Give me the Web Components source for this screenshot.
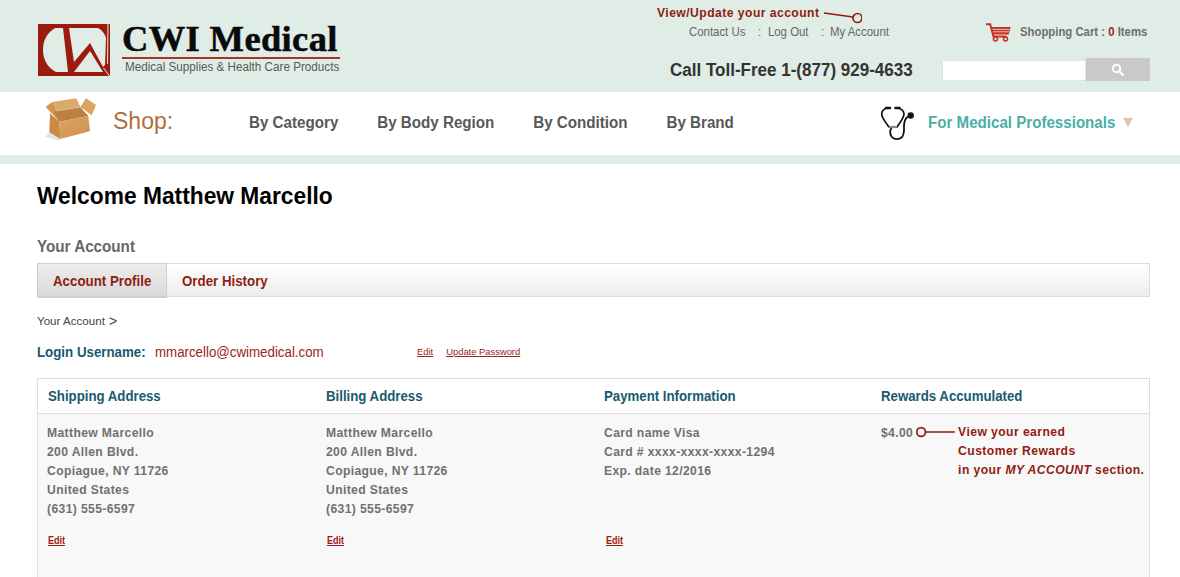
<!DOCTYPE html>
<html><head><meta charset="utf-8"><title>CWI Medical</title>
<style>
html,body{margin:0;padding:0;background:#fff;overflow:hidden;font-family:"Liberation Sans",Arial,sans-serif}
body{width:1180px;height:577px}
</style></head><body>
<cwi-header></cwi-header>
<cwi-nav></cwi-nav>
<cwi-account></cwi-account>
<script>
function def(name,html){
  customElements.define(name,class extends HTMLElement{
    constructor(){super();this.attachShadow({mode:'open'}).innerHTML=html;}
  });
}
def('cwi-logo',`<style>
:host{display:flex;gap:12px;align-items:flex-start}
svg{display:block;flex:none}
.t{display:flex;flex-direction:column;width:218px}
.n{font:bold 36.5px/30px "Liberation Serif",serif;color:#0a0a0a;height:30px;letter-spacing:.35px;-webkit-text-stroke:.5px #0a0a0a;white-space:nowrap}
.l{height:2px;background:#a9322b;margin-top:3px}
.s{font:12.3px/13px "Liberation Sans",sans-serif;color:#555b58;margin:2px 0 0 3px;white-space:nowrap;transform:scaleX(.95);transform-origin:left}
</style>
<svg width="72" height="52" viewBox="0 0 72 52"><rect width="72" height="52" fill="#9d1a10"/>
<path d="M25 4H17C9 9 5 16 5 26s5 18 13 22h12z" fill="#e0ece6"/>
<path d="M31 4H60C64 6 67 10 68 14L67 41 65 43 52 19 36 38Z" fill="#e0ece6"/>
<path d="M36 48L52 27 65 48Z" fill="#e0ece6"/>
<path d="M70 0L69.500 40M65.500 44l6 8" stroke="#e0ece6" stroke-width="1" fill="none"/>
</svg>
<div class="t"><div class="n">CWI Medical</div><div class="l"></div><div class="s">Medical Supplies &amp; Health Care Products</div></div>`);

def('cwi-search',`<style>
:host{display:flex;align-items:flex-end;height:23px}
.i{width:144px;background:#fff;border:1px solid #dfe5e2;box-sizing:border-box;height:21px}
.b{width:64px;height:23px;background:#c9c9c9;display:flex;align-items:center;justify-content:center}
</style><div class="i"></div><div class="b"><svg width="14" height="14" viewBox="0 0 14 14"><circle cx="5.5" cy="5.5" r="3.7" fill="none" stroke="#fff" stroke-width="2"/><path d="M8.5 8.5l4 4" stroke="#fff" stroke-width="2.4"/></svg></div>`);

def('cwi-header',`<style>
:host{display:flex;height:92px;background:#e0ece6;padding:24px 30px 0 38px;box-sizing:border-box;position:relative;color:#666}
.r{margin-left:auto;width:480px;display:flex;flex-direction:column}
.row1{display:flex;align-items:center;height:18px;margin:-1px 0 17px}
.lw{margin-left:19px;width:297px;flex:none}
.links{font:12px/18px "Liberation Sans",sans-serif;color:#666;white-space:nowrap;display:flex;transform:scaleX(.95);transform-origin:left}
.links span:nth-child(1){width:72.6px}.links span:nth-child(2){width:10.5px}
.links span:nth-child(3){width:55.8px}.links span:nth-child(4){width:9.5px}
.cart{display:flex;align-items:center;gap:9px;flex:none;font:bold 12px/18px "Liberation Sans",sans-serif;color:#6e6e6e;white-space:nowrap}
.cart span{display:block;transform:scaleX(.945);transform-origin:left}
.cart b{color:#b3200f}
.row2{display:flex;align-items:center;height:23px}
.tel{font:bold 18px/23px "Liberation Sans",sans-serif;color:#333;width:272px;white-space:nowrap;margin-top:2px}
.tel span{display:block;transform:scaleX(.945);transform-origin:left}
.note{position:absolute;left:657px;top:5px;font:bold 13.500px/15px "Liberation Sans",sans-serif;letter-spacing:.5px;color:#8f1d12;white-space:nowrap}
.note span{display:block;transform:scaleX(.9);transform-origin:left}
.note svg{position:absolute;left:165px;top:3px}
</style>
<cwi-logo></cwi-logo>
<div class="r">
<div class="row1"><div class="lw"><div class="links"><span>Contact Us</span><span>:</span><span>Log Out</span><span>:</span><span>My Account</span></div></div>
<div class="cart"><svg width="25" height="19" viewBox="0 0 25 19"><path d="M0 1.2h4.2l3.3 12.3h13" fill="none" stroke="#c8301f" stroke-width="2"/><path d="M5.6 4h19l-1.8 7.5H7.4z" fill="#c8301f"/><path d="M6.5 6.4h17M7 8.8h16" stroke="#e0ece6" stroke-width=".8"/><circle cx="9.5" cy="16" r="2" fill="none" stroke="#c8301f" stroke-width="1.6"/><circle cx="19.5" cy="16" r="2" fill="none" stroke="#c8301f" stroke-width="1.6"/></svg><span>Shopping Cart : <b>0</b> Items</span></div></div>
<div class="row2"><div class="tel"><span>Call Toll-Free 1-(877) 929-4633</span></div><cwi-search></cwi-search></div>
</div>
<div class="note"><span>View/Update your account</span><svg width="40" height="18" viewBox="0 0 40 18"><path d="M2 5l29 4" stroke="#8f1d12" stroke-width="1.5"/><circle cx="35.5" cy="10" r="4.5" fill="none" stroke="#8f1d12" stroke-width="1.7"/></svg></div>`);

def('cwi-nav',`<style>
:host{display:block;border-bottom:9px solid #e0ece6;height:63px;background:#fff}
.w{display:flex;align-items:center;height:63px;box-sizing:border-box;padding:0 0 2px 44px;font:bold 16px/20px "Liberation Sans",sans-serif;color:#58585a;white-space:nowrap}
.shop{font:23px/28px "Liberation Sans",sans-serif;color:#b06f3a;margin:0 0 4px 16px;width:136px}
.iw{width:632px}
.items{display:flex;gap:41px;transform:scaleX(.948);transform-origin:left}
.pw{margin-left:13px;width:187px;color:#4aaea8}
.pw span{display:block;transform:scaleX(.945);transform-origin:left}
.tri{width:0;height:0;border:5.500px solid transparent;border-top:9px solid #e3c3a6;border-bottom:0;margin-left:8px}
</style><div class="w">
<svg width="53" height="45" viewBox="42 21 159 135" style="flex:none;margin-top:-6px"><defs><linearGradient id="g" x1="0" y1="0" x2="1" y2="1"><stop offset="0" stop-color="#dba363"/><stop offset="1" stop-color="#cf9050"/></linearGradient></defs>
<path d="M58 127l33 20-5 5-40-12z" fill="#e4e4e4"/>
<path d="M67 36l72-11 12 26-70 12z" fill="#dca96c"/><path d="M47 50l20-14 14 27 7 32z" fill="#d39550"/>
<path d="M151 51l17-26 30 20-13 31z" fill="#dba35f"/><path d="M72 65l79-13 24 26-87 17z" fill="#bb8043"/>
<path d="M60 70l28 25 3 52-33-20z" fill="#c98a47"/><path d="M88 95l87-17 5 46-89 23z" fill="url(#g)"/></svg>
<div class="shop">Shop:</div>
<div class="iw"><div class="items"><span>By Category</span><span>By Body Region</span><span>By Condition</span><span>By Brand</span></div></div>
<svg width="35" height="36" viewBox="0 0 35 36" style="flex:none;margin-left:-1px"><path d="M7.500 3C3.500 4 1.500 6.500 1.700 9.500 2 13 6 18 9 22h8c2.500-4 7-9 7-13 0-3-2.500-5-6.500-6" fill="none" stroke="#111" stroke-width="1.700"/><path d="M6 3h4M15.500 3h4" stroke="#111" stroke-width="2.600" stroke-linecap="round"/><path d="M9 22h8" stroke="#888" stroke-width="2.200"/><path d="M11.500 23c-2 3-1.500 6 0 8.500 2 3 7 3.500 10 1 3-2.500 2.500-6 2.500-11 0-4.500 1-8 4-10" fill="none" stroke="#111" stroke-width="1.800"/><circle cx="30.700" cy="10.500" r="3.200" fill="#111"/></svg>
<div class="pw"><span>For Medical Professionals</span></div><span class="tri"></span></div>`);

def('cwi-column',`<style>
:host{display:block;flex:1 1 0;min-width:0}
.h{height:35px;box-sizing:border-box;background:#fff;border-bottom:1px solid #ddd;padding-left:10px;font:bold 14px/34px "Liberation Sans",sans-serif;color:#175a6e;white-space:nowrap}
.h div{transform:scaleX(.945);transform-origin:left}
.b{background:#f8f8f8;height:164px;padding:9px 0 0 var(--p,9.5px);box-sizing:border-box;font:bold 13.500px/19px "Liberation Sans",sans-serif;letter-spacing:.4px;color:#707070;white-space:nowrap}
.e{display:flex;flex-direction:column;height:126px;justify-content:space-between;transform:scaleX(.9);transform-origin:left}
.ed{padding-left:var(--e,1.1px)}
</style><div class="h"><div><slot name="title"></slot></div></div><div class="b"><div class="e"><div><slot></slot></div><div class="ed"><slot name="edit"></slot></div></div></div>`);

def('cwi-edit',`<style>:host{display:inline;font:bold 10px/12px "Liberation Sans",sans-serif;color:#9c1a12;text-decoration:underline;letter-spacing:0}</style><slot></slot>`);

def('cwi-rewards',`<style>
:host{display:flex;align-items:flex-start}
svg{margin:0 3.300px;flex:none}
.t{color:#8f1d12;margin-top:-1px;letter-spacing:.47px}
i{font-style:italic}
</style><span>$4.00</span><svg width="43.300" height="19" viewBox="0 0 39 19" preserveAspectRatio="none"><circle cx="5" cy="9" r="4.400" fill="none" stroke="#8f1d12" stroke-width="1.800"/><path d="M9 9h30" stroke="#8f1d12" stroke-width="1.400"/></svg><div class="t">View your earned<br>Customer Rewards<br>in your <i>MY ACCOUNT</i> section.</div>`);

def('cwi-account',`<style>
:host{display:block;padding:0 30px 0 37px;height:413px;box-sizing:border-box;overflow:hidden;white-space:nowrap}
h1{font:bold 24px/28px "Liberation Sans",sans-serif;color:#000;margin:18px 0 0;transform:scaleX(.949);transform-origin:left}
h2{font:bold 16px/20px "Liberation Sans",sans-serif;color:#666;margin:27px 0 0;transform:scaleX(.95);transform-origin:left}
.tabs{display:flex;height:34px;margin-top:6px;border:1px solid #ddd;box-sizing:border-box;background:linear-gradient(#fff,#ececec);font:bold 14px/34px "Liberation Sans",sans-serif;color:#8f1d12}
.tab{width:130px;box-sizing:border-box;padding-left:15px;height:35px;margin:-1px 0 0 -1px;border:1px solid #cfcfcf;border-bottom:2px solid #cfcfcf;background:linear-gradient(#ececec,#dadada);line-height:34px}
.tab span,.tab2 span{display:block;transform:scaleX(.95);transform-origin:left}
.tab2{margin-left:15px}
.crumb{font:11.600px/16px "Liberation Sans",sans-serif;color:#444;margin-top:16px;display:flex;align-items:center;gap:4px}
.crumb span{font-size:14px}
.login{display:flex;align-items:center;height:18px;margin-top:14px;font:14px/18px "Liberation Sans",sans-serif;color:#9a2420;transform:scaleX(.95);transform-origin:left}
.login b{color:#175a6e;width:124.200px}
.login div{width:275.800px}
.login a{font:9.900px/12px "Liberation Sans",sans-serif;color:#9a2420;text-decoration:underline;margin-right:13.700px}
.panel{display:flex;margin-top:17px;border:1px solid #ddd;border-bottom:0;box-sizing:border-box}
</style>
<h1>Welcome Matthew Marcello</h1>
<h2>Your Account</h2>
<div class="tabs"><div class="tab"><span>Account Profile</span></div><div class="tab2"><span>Order History</span></div></div>
<div class="crumb">Your Account <span>&gt;</span></div>
<div class="login"><b>Login Username:</b><div>mmarcello@cwimedical.com</div><a>Edit</a><a>Update Password</a></div>
<div class="panel">
<cwi-column style="--p:9px"><span slot="title">Shipping Address</span>Matthew Marcello<br>200 Allen Blvd.<br>Copiague, NY 11726<br>United States<br>(631) 555-6597<cwi-edit slot="edit">Edit</cwi-edit></cwi-column>
<cwi-column style="--p:10px"><span slot="title">Billing Address</span>Matthew Marcello<br>200 Allen Blvd.<br>Copiague, NY 11726<br>United States<br>(631) 555-6597<cwi-edit slot="edit">Edit</cwi-edit></cwi-column>
<cwi-column style="--p:10px;--e:2.2px"><span slot="title">Payment Information</span>Card name Visa<br>Card # xxxx-xxxx-xxxx-1294<br>Exp. date 12/2016<cwi-edit slot="edit">Edit</cwi-edit></cwi-column>
<cwi-column style="--p:10px"><span slot="title">Rewards Accumulated</span><cwi-rewards></cwi-rewards></cwi-column>
</div>`);
</script>
</body></html>
